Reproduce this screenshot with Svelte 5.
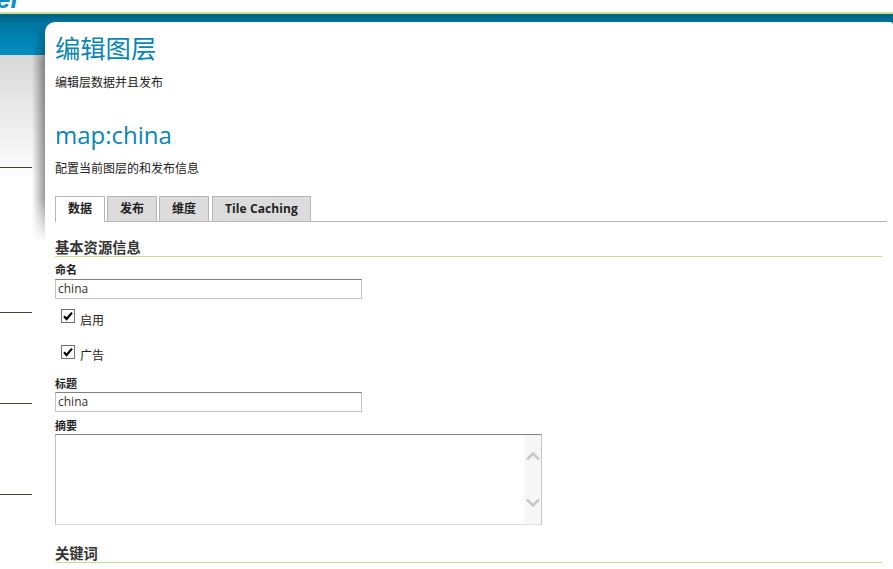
<script>
  const tabs = ['数据', '发布', '维度', 'Tile Caching'];
</script>

<div class="page">
  <header class="top"><span class="logo">er</span></header>
  <div class="shell">
    <aside class="side">
      <i class="rule first"></i>
      <i class="rule second"></i>
      <i class="rule third"></i>
      <i class="rule fourth"></i>
    </aside>
    <main class="panel">
      <h1>编辑图层</h1>
      <p class="sub">编辑层数据并且发布</p>
      <h2>map:china</h2>
      <p class="sub two">配置当前图层的和发布信息</p>
      <nav class="tabs">
        {#each tabs as t, i}
          <span class="tab" class:active={i === 0}>{t}</span>
        {/each}
      </nav>
      <h3>基本资源信息</h3>
      <label class="lbl" for="n">命名</label>
      <input id="n" class="field" value="china" />
      <div class="check one">
        <svg class="box" width="14" height="14" viewBox="0 0 14 14"><rect x=".5" y=".5" width="13" height="13" fill="#fff" stroke="#707070"/><path d="M3 7.2 5.6 10 11 3.6" fill="none" stroke="#000" stroke-width="2.2"/></svg>
        <span>启用</span>
      </div>
      <div class="check two">
        <svg class="box" width="14" height="14" viewBox="0 0 14 14"><rect x=".5" y=".5" width="13" height="13" fill="#fff" stroke="#707070"/><path d="M3 7.2 5.6 10 11 3.6" fill="none" stroke="#000" stroke-width="2.2"/></svg>
        <span>广告</span>
      </div>
      <label class="lbl t" for="t">标题</label>
      <input id="t" class="field second-field" value="china" />
      <label class="lbl a" for="a">摘要</label>
      <div class="area">
        <textarea id="a"></textarea>
        <div class="bar">
          <svg width="14" height="10" viewBox="0 0 14 10"><path d="M1 8.5 7 2.5l6 6" fill="none" stroke="#c8c8c8" stroke-width="2.6"/></svg>
          <svg width="14" height="10" viewBox="0 0 14 10"><path d="M1 1.5l6 6 6-6" fill="none" stroke="#c8c8c8" stroke-width="2.6"/></svg>
        </div>
      </div>
      <h3 class="kw">关键词</h3>
    </main>
  </div>
</div>

<style>
  :global(body) { margin: 0; background: #fff; }
  .page {
    width: 893px; height: 569px; overflow: hidden;
    font-family: "Open Sans", "Noto Sans CJK SC", sans-serif;
    font-size: 12px; color: #222;
  }
  .top { height: 12px; overflow: hidden; }
  .logo {
    display: block; margin: -14px 0 0 -4px; font: italic 700 26px/26px "Liberation Sans", sans-serif; color: #0a8fc4;
  }
  .shell {
    border-top: 2px solid #c9df9a;
    display: grid; grid-template-columns: 45px 1fr;
    height: 555px; padding-top: 8px; box-sizing: border-box;
    background:
      linear-gradient(#00607f 0, #0077a3 10px, #0090c2 100%) 0 0 / 100% 41px no-repeat,
      linear-gradient(#d8d8d8, #fff) 0 41px / 100% 125px no-repeat;
  }
  .side { position: relative; }
  .side::after {
    content: ""; position: absolute; right: 0; top: 0; width: 13px; height: 220px;
    background: linear-gradient(90deg, transparent, rgba(0,0,0,.4));
    mask-image: linear-gradient(transparent, #000 40px, #000 80%, transparent);
  }
  .rule { position: absolute; left: 0; width: 32px; height: 1px; background: #3c4430; }
  .first { top: 145px; } .second { top: 290px; } .third { top: 381px; } .fourth { top: 472px; }
  .panel {
    background: #fff; border-radius: 10px 3px 0 0; padding: 9px 6px 0 10px; min-width: 0;
  }
  h1 { margin: 0; font-size: 25.3px; line-height: 34px; font-weight: 400; color: #0a85b8; }
  .sub { margin: 10px 0 0; line-height: 16px; font-size: 12px; }
  h2 { margin: 27px 0 0; font-size: 24px; line-height: 34px; font-weight: 400; color: #0a85b8; }
  .sub.two { margin-top: 9px; }
  .tabs { display: flex; gap: 2px; margin-top: 19px; border-bottom: 1px solid #b5b5b5; height: 25px; }
  .tab {
    box-sizing: border-box; height: 25px; padding: 0 12px; line-height: 24px;
    background: #dcdcdc; border: 1px solid #b5b5b5; border-bottom: 0;
    font-weight: 700; font-size: 12px;
  }
  .tab:last-child { margin-left: 1px; letter-spacing: .08px; }
  .tab.active { background: #fff; height: 26px; position: relative; }
  h3 {
    margin: 16px 5px 0 0; font-size: 14.3px; line-height: 20px; font-weight: 700; color: #333;
    border-bottom: 1px solid #c5de8e; height: 18px;
  }
  .lbl { display: block; font-size: 11px; font-weight: 700; line-height: 14px; margin-top: 6px; }
  .field {
    display: block; box-sizing: border-box; width: 307px; height: 20px; margin: 2px 0 0; padding: 0 2px 2px;
    border: 1px solid #c4c4c4; border-top-color: #808080; font: 12px "Open Sans", sans-serif; color: #333;
    outline: 0; border-radius: 0;
  }
  .second-field { margin-top: 1px; }
  .check { display: flex; align-items: flex-start; gap: 5px; margin-left: 6px; height: 24px; font-size: 12px; }
  .check.one { margin-top: 10px; }
  .check.two { margin-top: 12px; }
  .check span { line-height: 16px; }
  .check.one span { margin-top: 4px; }
  .check.two span { margin-top: 3px; }
  .lbl.t { margin-top: 8px; }
  .lbl.a { margin-top: 7px; }
  .area {
    box-sizing: border-box; width: 487px; height: 91px; margin-top: 1px;
    border: 1px solid #c4c4c4; border-top-color: #808080; border-bottom-color: #ddd; display: flex;
  }
  textarea { flex: 1; border: 0; outline: 0; resize: none; padding: 0; overflow: hidden; }
  .bar { width: 17px; background: #f7f7f7; display: flex; flex-direction: column; align-items: center; justify-content: space-between; padding: 16px 0; box-sizing: border-box; }
  h3.kw { margin-top: 19px; }
</style>
